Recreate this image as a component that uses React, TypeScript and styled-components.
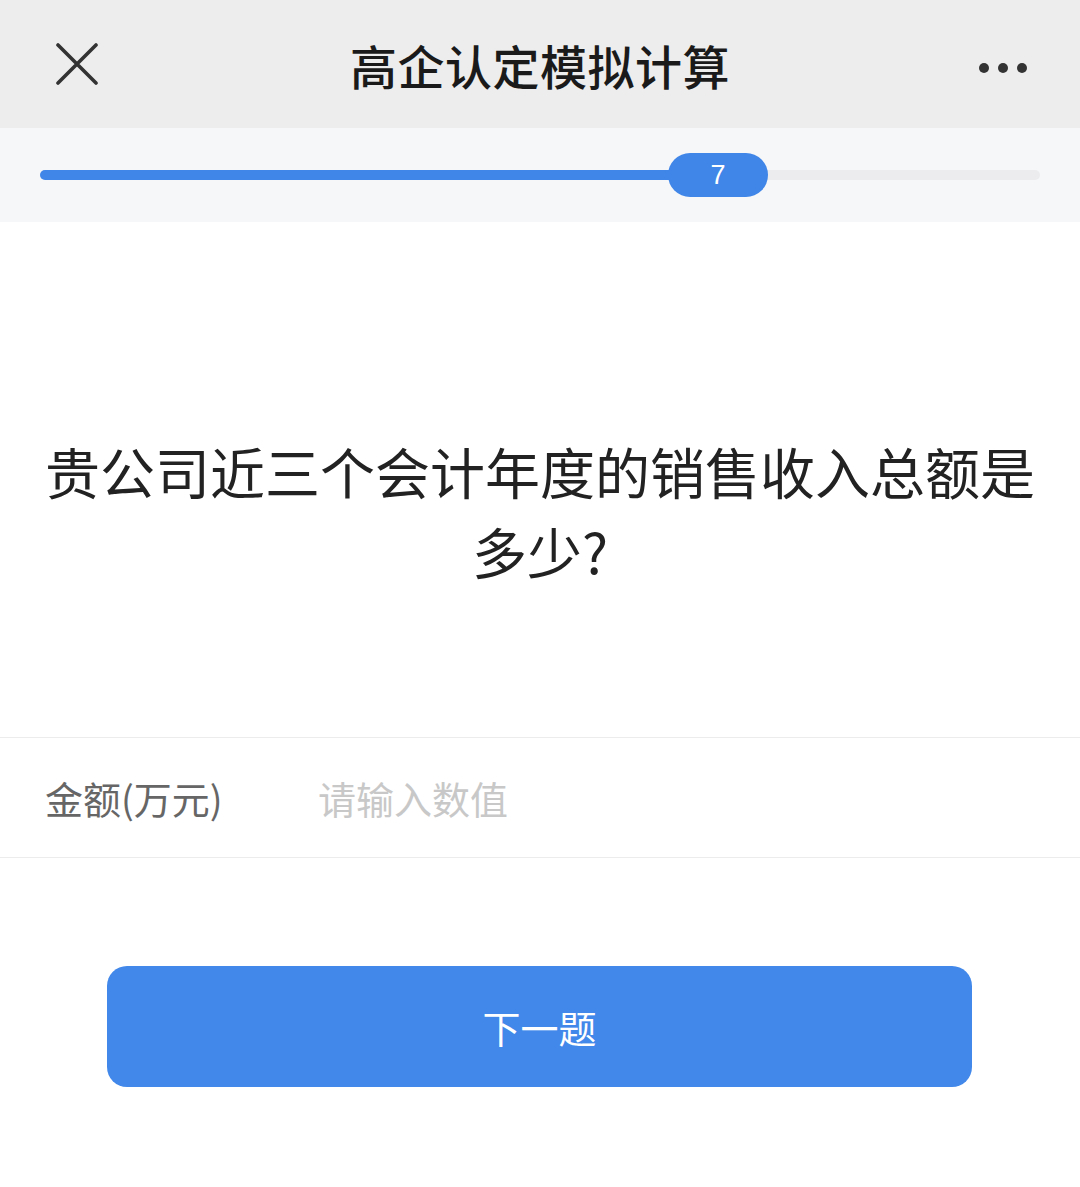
import React from "react";
import styled, { createGlobalStyle } from "styled-components";

const Global = createGlobalStyle`
  html, body { margin: 0; padding: 0; background: #ffffff; }
  body { font-family: "Noto Sans CJK SC", "Noto Sans", sans-serif; }
  * { box-sizing: border-box; }
`;

const Page = styled.div`
  width: 1080px;
  height: 1187px;
  background: #ffffff;
  display: flex;
  flex-direction: column;
`;

const Header = styled.header`
  height: 128px;
  background: #ededed;
  display: grid;
  grid-template-columns: 160px 1fr 160px;
  align-items: center;
`;

const IconSlot = styled.div<{ $align: "start" | "end" }>`
  display: flex;
  justify-content: ${(p) => (p.$align === "start" ? "flex-start" : "flex-end")};
  padding: ${(p) => (p.$align === "start" ? "0 0 0 56px" : "8px 52px 0 0")};
  align-items: center;
`;

const Title = styled.h1`
  margin: 0;
  text-align: center;
  font-size: 47px;
  font-weight: 500;
  color: #1a1a1a;
  letter-spacing: 0.5px;
  line-height: 1;
`;

const ProgressBar = styled.div`
  height: 94px;
  background: #f6f7f9;
  padding: 0 40px;
  display: flex;
  align-items: center;
`;

const Track = styled.div`
  position: relative;
  flex: 1;
  height: 10px;
  border-radius: 5px;
  background: #ececee;
`;

const Fill = styled.div`
  position: absolute;
  left: 0;
  top: 0;
  bottom: 0;
  border-radius: 5px;
  background: #4086e8;
`;

const Thumb = styled.div`
  position: absolute;
  top: 50%;
  width: 100px;
  height: 44px;
  margin-left: -50px;
  transform: translateY(-50%);
  border-radius: 22px;
  background: #4086e8;
  color: #ffffff;
  font-family: "Liberation Sans", Arial, sans-serif;
  font-size: 27px;
  display: flex;
  align-items: center;
  justify-content: center;
`;

const QuestionArea = styled.section`
  height: 515px;
  padding: 208px 10px 0;
`;

const Question = styled.p`
  margin: 0;
  text-align: center;
  font-size: 55px;
  line-height: 80px;
  color: #222222;
  font-weight: 400;
`;

const InputRow = styled.label`
  height: 121px;
  border-top: 1px solid #ececec;
  border-bottom: 1px solid #ececec;
  display: flex;
  align-items: center;
  padding-left: 45px;
`;

const FieldLabel = styled.span`
  width: 273px;
  font-size: 38px;
  color: #666666;
`;

const FieldInput = styled.input`
  flex: 1;
  border: none;
  outline: none;
  background: transparent;
  font-family: "Noto Sans CJK SC", sans-serif;
  font-size: 38px;
  color: #333;
  padding: 0;
  &::placeholder { color: #c8c8c8; }
`;

const Actions = styled.div`
  padding: 108px 108px 0 107px;
`;

const NextButton = styled.button`
  width: 100%;
  height: 121px;
  border: none;
  border-radius: 20px;
  background: #4188ea;
  color: #ffffff;
  font-family: "Noto Sans CJK SC", sans-serif;
  font-size: 38px;
  cursor: pointer;
`;

export default function App() {
  const progress = 0.678;
  return (
    <Page>
      <Global />
      <Header>
        <IconSlot $align="start">
          <svg width="42" height="42" viewBox="0 0 42 42">
            <path d="M2 2 L40 40 M40 2 L2 40" stroke="#333" strokeWidth="3.6" strokeLinecap="round" />
          </svg>
        </IconSlot>
        <Title>高企认定模拟计算</Title>
        <IconSlot $align="end">
          <svg width="50" height="12" viewBox="0 0 50 12">
            <circle cx="6" cy="6" r="5" fill="#333" />
            <circle cx="25" cy="6" r="5" fill="#333" />
            <circle cx="44" cy="6" r="5" fill="#333" />
          </svg>
        </IconSlot>
      </Header>
      <ProgressBar>
        <Track>
          <Fill style={{ width: `${progress * 100}%` }} />
          <Thumb style={{ left: `${progress * 100}%` }}>7</Thumb>
        </Track>
      </ProgressBar>
      <QuestionArea>
        <Question>
          贵公司近三个会计年度的销售收入总额是
          <br />
          多少?
        </Question>
      </QuestionArea>
      <InputRow>
        <FieldLabel>金额(万元)</FieldLabel>
        <FieldInput placeholder="请输入数值" />
      </InputRow>
      <Actions>
        <NextButton>下一题</NextButton>
      </Actions>
    </Page>
  );
}
